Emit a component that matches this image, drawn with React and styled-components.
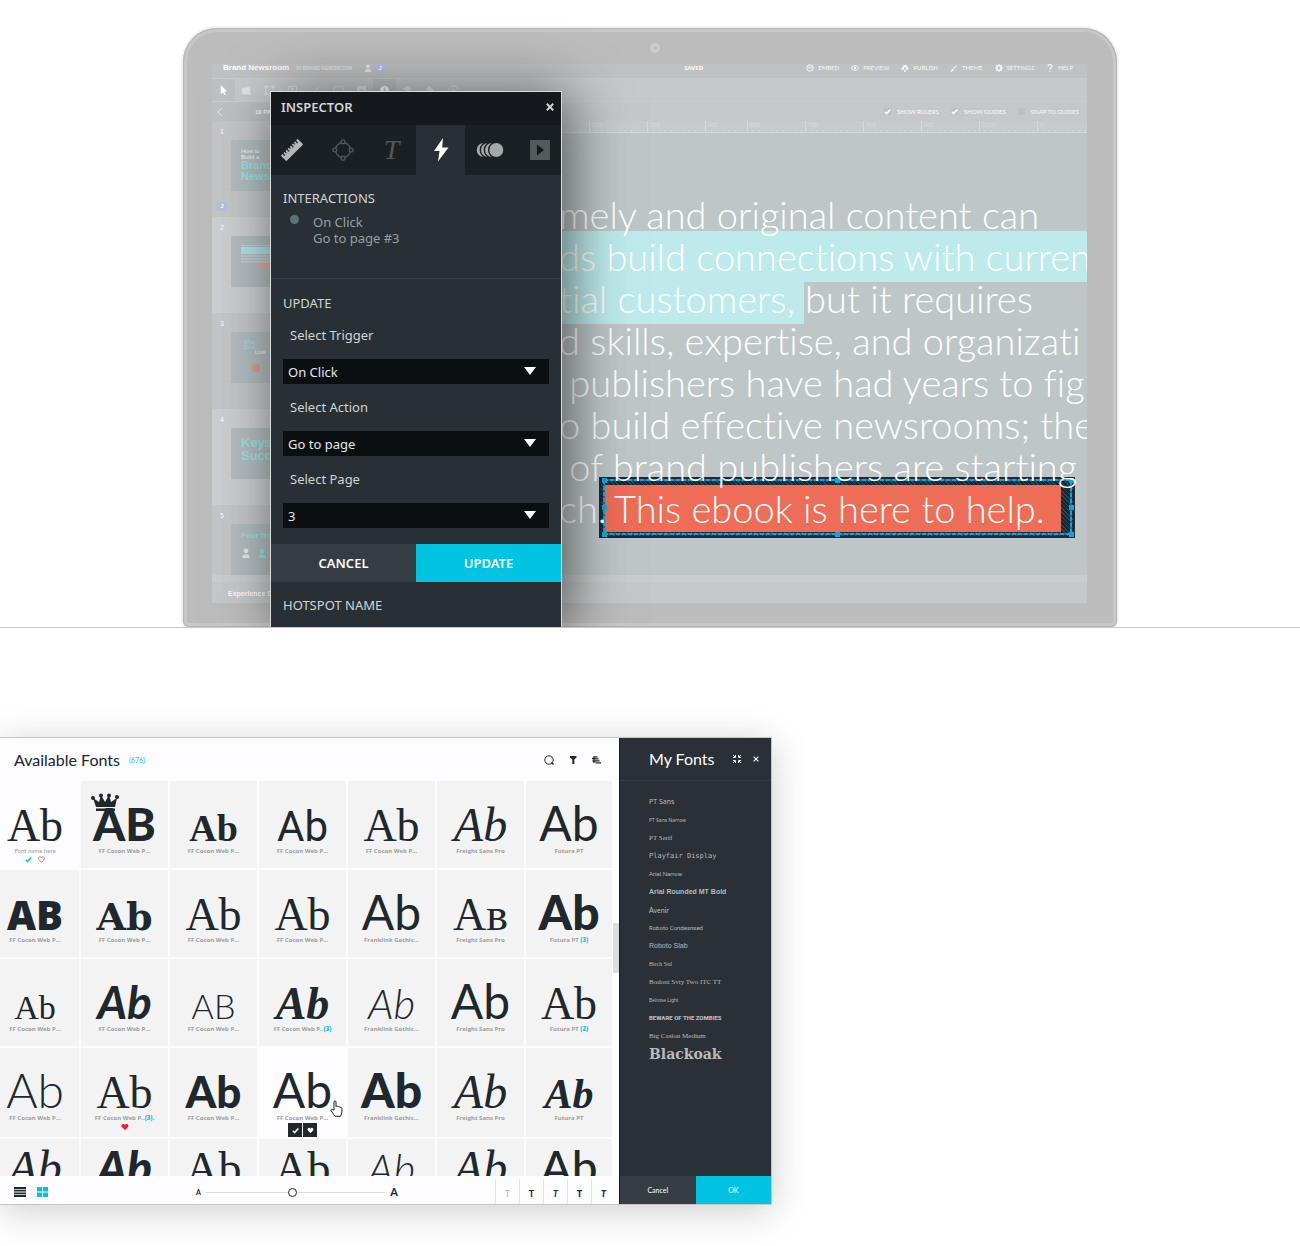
import React from 'react';
import styled, { createGlobalStyle, css } from 'styled-components';

const INK = '#20272d';
const CYAN = '#00c4e2';
const UI = '"Noto Sans", "Open Sans", sans-serif';
const GEO = 'Lato, "Open Sans", sans-serif';
const ARIAL = '"Liberation Sans", Arial, sans-serif';

const Global = createGlobalStyle`
  *, *::before, *::after { box-sizing: border-box; }
  body { margin: 0; background: #fff; font-family: ${GEO}; color: ${INK}; }
  button, select, input { font: inherit; color: inherit; margin: 0; padding: 0; border: 0; background: none; }
  h1, h2, h3, p, ul, ol { margin: 0; padding: 0; font-weight: inherit; font-size: inherit; }
  ul, ol { list-style: none; }
  a { color: inherit; text-decoration: none; }
  svg { display: block; flex: none; }
`;

/* ---------- Hero ---------- */

const Hero = styled.section`
  display: flex;
  justify-content: center;
  padding-top: 28px;
  border-bottom: 1px solid #c8c8c8;
  overflow: hidden;
`;

const Laptop = styled.div`
  position: relative;
  flex: 0 1 934px;
  min-width: 0;
  padding: 36px 30px 24px 29px;
  border-radius: 34px 34px 6px 6px;
  background: #bcbcbc;
  box-shadow: 0 0 0 2px #f3f3f3, inset 0 0 0 1px #b4b4b4, inset 0 0 0 4px #c7c7c7;
`;

const Camera = styled.span`
  position: absolute;
  top: 15px;
  left: 50%;
  width: 10px;
  height: 10px;
  border-radius: 50%;
  background: radial-gradient(#bdb9dc 0 1px, #cfcfd2 3px, #c8c8c8 5px);
`;

const Screen = styled.div`
  display: flex;
  flex-direction: column;
  overflow: hidden;
  background: #c6c7c9;
  color: #fbfbfb;
  font-family: ${ARIAL};
`;

const AppBar = styled.header`
  display: grid;
  grid-template-columns: 54% auto 1fr;
  align-items: start;
  height: 15px;
  padding: 0 10px 0 11px;
  background: #c0c1c2;
  border-bottom: 1px solid #cbcccd;
  line-height: 8px;
`;

const Brand = styled.div`
  display: flex;
  gap: 7px;
  font-size: 5px;
  color: #ececec;
  strong { font-size: 8px; color: #fff; line-height: 8px; }
  svg { margin: 0 -4px 0 5px; }
`;

const Badge = styled.span`
  width: 10px;
  height: 9px;
  background: #b4bfe0;
  color: #fff;
  font-size: 6px;
  font-weight: 700;
  line-height: 8px;
  text-align: center;
`;

const Saved = styled.span`
  font: 700 6px/8px ${UI};
`;

const AppMenu = styled.nav`
  display: flex;
  justify-content: flex-end;
  gap: 12px;
  padding-right: 4px;
  font: 6px/8px ${GEO};
`;

const MenuLink = styled.a`
  display: flex;
  align-items: center;
  gap: 4px;
  color: #f6f6f6;
`;

const ToolBar = styled.div`
  display: flex;
  height: 23px;
  background: #c7c8ca;
  border-bottom: 1px solid #cbccce;
`;

const Tool = styled.button`
  display: flex;
  align-items: center;
  justify-content: center;
  width: 23px;
  background: ${(p) => (p.$on ? '#bfc0c2' : 'transparent')};
  color: ${(p) => (p.$strong ? '#fff' : '#e2e3e4')};
`;

const Work = styled.div`
  display: flex;
  min-width: 0;
`;

const Pages = styled.aside`
  flex: none;
  width: 120px;
`;

const PagesHead = styled.div`
  display: flex;
  align-items: center;
  gap: 32px;
  height: 19px;
  padding-left: 5px;
  background: #bebfc1;
  font: 700 6px/8px ${ARIAL};
`;

const PageItem = styled.li`
  display: flex;
  height: 96px;
  background: ${(p) => (p.$on ? '#cccdd0' : '#c3c5c7')};
  &:last-child { height: 70px; }
`;

const PageMeta = styled.div`
  display: flex;
  flex-direction: column;
  justify-content: space-between;
  width: 19px;
  padding: 6px 0 6px 5px;
  font-size: 7px;
  line-height: 10px;
  text-indent: 3px;
  ${Badge} { text-indent: 0; }
`;

const Thumb = styled.div`
  flex: 1;
  height: 51px;
  margin: 19px 8px 0 0;
  padding: 8px 0 0 10px;
  overflow: hidden;
  background: #b2bcbf;
  white-space: nowrap;
`;

const ThumbText = styled.div`
  font-size: ${(p) => p.$size}px;
  line-height: ${(p) => p.$size}px;
  font-weight: ${(p) => (p.$size > 6 ? 700 : 400)};
  color: ${(p) => (p.$cyan ? '#9be0e2' : '#f4f6f6')};
`;

const ThumbBar = styled.div`
  height: ${(p) => p.$h}px;
  margin: 1px 0 1px ${(p) => p.$inset || 0}px;
  background: ${(p) => p.$tone};
`;

const People = styled.div`
  display: flex;
  gap: 6px;
  padding-top: 8px;
`;

const Stage = styled.div`
  flex: 1;
  min-width: 0;
`;

const GuideBar = styled.div`
  display: flex;
  align-items: center;
  justify-content: flex-end;
  gap: 12px;
  height: 19px;
  padding-right: 8px;
  font: 6px/8px ${GEO};
`;

const Guide = styled.label`
  display: flex;
  align-items: center;
  gap: 6px;
  input {
    appearance: none;
    width: 7px;
    height: 7px;
    background: #bebfc0;
  }
  span { display: grid; }
  svg, input { grid-area: 1 / 1; }
`;

const Ruler = styled.div`
  display: flex;
  height: 12px;
  padding-left: 25px;
  overflow: hidden;
  border-bottom: 1px solid #d6d8d9;
  background: #c9cacc;
`;

const RulerMark = styled.span`
  flex: none;
  width: ${(p) => (p.$short ? 42 : 58)}px;
  padding-left: 2px;
  border-left: 1px solid #d8d9da;
  color: #d9dadb;
  font-size: 6px;
  line-height: 8px;
  background: repeating-linear-gradient(90deg, transparent 0 5px, #d5d6d7 5px 6px) 0 100% / 100% 2px no-repeat;
`;

const Canvas = styled.div`
  position: relative;
  height: 442px;
  overflow: hidden;
  background: #bec6c8;
`;

const Copy = styled.p`
  position: relative;
  padding: 60px 0 0 227px;
  color: #fff;
  font: 300 38px/42px ${GEO};
  font-variant-ligatures: none;
  white-space: pre;
`;

const Line = styled.span`
  display: block;
  height: 42px;
`;

const Highlight = styled.span`
  position: absolute;
  left: 0;
  top: ${(p) => p.$top}px;
  width: ${(p) => p.$w};
  height: ${(p) => p.$h}px;
  background: #beeaeb;
`;

const hatch = (a, b) =>
  css`repeating-linear-gradient(45deg, ${a} 0 1px, ${b} 1px 3px)`;

const Hotspot = styled.a`
  position: absolute;
  left: 267px;
  top: 344px;
  width: 476px;
  height: 61px;
  padding: 8px 12px 6px 6px;
  background: ${hatch('#31444f', '#182733')};
  border: 2px solid #1b2a36;
  font: 300 38px/46px ${GEO};
  color: #fff;
  white-space: nowrap;
`;

const HotspotFill = styled.span`
  display: block;
  height: 47px;
  margin: -2px 0 0 -2px;
  padding-left: 9px;
  background: ${hatch('#e8735c', '#f26a53')};
`;

const Selection = styled.svg`
  position: absolute;
  inset: 0;
  width: 100%;
  height: 100%;
  overflow: visible;
`;

const StatusBar = styled.footer`
  display: flex;
  align-items: center;
  height: 28px;
  padding: 2px 16px 0;
  border-top: 7px solid #cacccd;
  background: #c6c7c8;
  font: 700 7px/8px ${ARIAL};
`;

/* ---------- Inspector ---------- */

const Inspector = styled.section`
  position: absolute;
  left: 87px;
  top: 63px;
  bottom: 0;
  width: 292px;
  display: flex;
  flex-direction: column;
  border: solid #d8dadb;
  border-width: 1px 1px 0;
  background: #282f35;
  color: #d3d5d6;
  box-shadow: 8px 4px 54px rgba(0, 0, 0, 0.58);
  font: 13px/16px ${UI};
`;

const TitleBar = styled.header`
  display: flex;
  justify-content: space-between;
  align-items: center;
  height: 33px;
  padding: 0 7px 4px 10px;
  background: #15181c;
  h2 { font: 600 13px/16px ${UI}; }
`;

const IconButton = styled.button`
  display: inline-flex;
  align-items: center;
  justify-content: center;
`;

const Tabs = styled.div`
  display: grid;
  grid-template-columns: 47px repeat(4, 49px) 1fr;
  height: 50px;
  background: #1a2023;
`;

const Tab = styled.button`
  display: flex;
  align-items: center;
  justify-content: center;
  background: ${(p) => (p.$on ? '#282f35' : 'transparent')};
  color: #50575b;
  font: italic 28px/30px "Liberation Serif", serif;
  &:first-child { padding-right: 5px; }
  &:last-child { padding-left: 5px; }
`;

const Interactions = styled.div`
  height: 104px;
  padding: 15px 12px 0;
  border-bottom: 1px solid #3a4248;
`;

const Heading = styled.h3`
  line-height: 16px;
`;

const Trigger = styled.div`
  display: flex;
  gap: 14px;
  padding: 8px 0 0 7px;
  color: #9b9fa2;
  &::before {
    content: '';
    width: 9px;
    height: 9px;
    margin-top: 1px;
    border-radius: 50%;
    background: #5f7079;
  }
`;

const Form = styled.form`
  padding-top: 16px;
`;

const FormBody = styled.div`
  padding: 0 12px 16px;
`;

const Field = styled.div`
  display: flex;
  flex-direction: column;
  label { height: 32px; padding-left: 7px; }
  & + & { padding-top: 15px; }
  ${Heading} + & { padding-top: 16px; }
`;

const SelectBox = styled.div`
  position: relative;
  select {
    appearance: none;
    display: block;
    width: 100%;
    height: 25px;
    padding: 0 5px;
    background: #0c0f11;
    color: #e6e7e8;
  }
  svg {
    position: absolute;
    right: 13px;
    top: 8px;
    pointer-events: none;
  }
`;

const Actions = styled.div`
  display: grid;
  grid-template-columns: 1fr 1fr;
`;

const Action = styled.button`
  height: ${(p) => (p.$small ? 28 : 38)}px;
  background: ${(p) => (p.$primary ? CYAN : '#353c43')};
  color: #fff;
  font: ${(p) => (p.$small ? `7px/8px ${GEO}` : `600 13px/16px ${UI}`)};
`;

const NextHeading = styled(Heading)`
  padding: 15px 12px 0;
`;

/* ---------- Font manager ---------- */

const FontSection = styled.section`
  padding: 109px 0 40px;
`;

const Manager = styled.div`
  display: flex;
  width: 100%;
  max-width: 772px;
  border: solid #c6c6c8;
  border-width: 1px 1px 1px 0;
  box-shadow: 0 6px 36px rgba(0, 0, 0, 0.2);
`;

const Library = styled.div`
  flex: 1;
  min-width: 0;
  background: #fdfcfe;
`;

const PanelHead = styled.header`
  display: flex;
  align-items: center;
  height: 43px;
  padding: ${(p) => (p.$dark ? '0 12px 0 29px' : '0 18px 0 14px')};
  border-bottom: ${(p) => (p.$dark ? '1px solid #363d45' : '0')};
  h2 { font: 16px/20px ${GEO}; }
`;

const Count = styled.span`
  color: #12c6e6;
  font-weight: ${(p) => (p.$bold ? 900 : 400)};
  font-size: ${(p) => (p.$bold ? 'inherit' : '7px')};
  margin-left: ${(p) => (p.$bold ? 0 : 9)}px;
`;

const HeadTools = styled.div`
  display: flex;
  gap: ${(p) => p.$gap}px;
  margin-left: auto;
`;

const Scroller = styled.div`
  display: flex;
  background: #fff;
`;

const Grid = styled.div`
  flex: 1;
  display: grid;
  grid-template-columns: 79px repeat(5, 1fr) 86px;
  grid-template-rows: repeat(4, 1fr) 37px;
  gap: 2px;
  height: 395px;
  background: #fcfcfd;
`;

const Track = styled.div`
  width: 7px;
  padding: 142px 0 0 1px;
  &::before {
    content: '';
    display: block;
    height: 50px;
    background: #dcdcdf;
  }
`;

const Cell = styled.div`
  position: relative;
  display: flex;
  flex-direction: column;
  align-items: center;
  min-width: 0;
  overflow: ${(p) => (p.$cut ? 'hidden' : 'visible')};
  padding-right: ${(p) => (p.$first ? 9 : 0)}px;
  background: ${(p) => (p.$open ? '#fdfcfe' : '#f3f3f3')};
`;

const Sample = styled.div`
  position: relative;
  line-height: 0;
  color: ${INK};
  white-space: nowrap;
  font-family: ${(p) => p.$face.family};
  font-size: ${(p) => p.$face.size}px;
  font-weight: ${(p) => p.$face.weight || 400};
  font-style: ${(p) => (p.$face.italic ? 'italic' : 'normal')};
  &::before {
    content: '';
    display: inline-block;
    height: ${(p) => (p.$cut ? 45 : 60)}px;
  }
`;

const Crown = styled.svg`
  position: absolute;
  left: -2px;
  top: 12px;
`;

const Caption = styled.div`
  margin-top: 6px;
  font: ${(p) => (p.$plain ? 400 : 700)} 6px/8px ${(p) => (p.$plain ? GEO : '"Open Sans", sans-serif')};
  color: #9c9d9e;
  white-space: nowrap;
`;

const Marks = styled.div`
  display: flex;
  gap: 6px;
  margin-top: 1px;
`;

const Quick = styled.div`
  display: flex;
  gap: 1px;
  margin-top: 1px;
`;

const QuickButton = styled(IconButton)`
  width: 14px;
  height: 14px;
  background: ${INK};
`;

const Pointer = styled.svg`
  position: absolute;
  right: 3px;
  top: 52px;
`;

const LibraryFoot = styled.footer`
  display: flex;
  align-items: stretch;
  height: 28px;
  padding-right: 4px;
`;

const Views = styled.div`
  display: flex;
  align-items: center;
  gap: 11px;
  padding: 3px 0 0 14px;
`;

const SizeControl = styled.div`
  flex: 1;
  display: flex;
  align-items: center;
  gap: 5px;
  padding: 4px 97px 0 148px;
  font: 700 7px/10px ${GEO};
  b { font-size: 11px; font-weight: 700; }
  input {
    appearance: none;
    flex: 1;
    min-width: 0;
    height: 10px;
    background: linear-gradient(#d9dfe0 0 0) 0 50% / 100% 1px no-repeat;
  }
  input::-webkit-slider-thumb {
    appearance: none;
    width: 9px;
    height: 9px;
    border: 1px solid ${INK};
    border-radius: 50%;
    background: #fdfcfe;
  }
`;

const StyleButton = styled.button`
  width: 24px;
  margin-top: 3px;
  padding-top: 3px;
  border-left: 1px solid #e2e3e6;
  font-family: ${GEO};
  font-size: 9px;
  font-weight: ${(p) => p.$weight};
  font-style: ${(p) => (p.$italic ? 'italic' : 'normal')};
  color: ${(p) => (p.$muted ? '#b4b5b8' : INK)};
`;

const MyFonts = styled.aside`
  display: flex;
  flex-direction: column;
  flex: none;
  width: 152px;
  background: #2a3036;
  border-left: 1px solid #161b20;
  color: #fff;
`;

const FontList = styled.ul`
  flex: 1;
  padding: 12px 0 0 29px;
`;

const FontName = styled.li`
  height: 18px;
  color: #b9bbbd;
  line-height: 18px;
  white-space: nowrap;
  font-family: ${(p) => p.$family};
  font-size: ${(p) => p.$size || 7}px;
  font-weight: ${(p) => p.$weight || 400};
`;

/* ---------- Icons ---------- */

const Check = ({ size = 7, color = '#fff' }) => (
  <svg width={size} height={size} viewBox="0 0 8 8" fill="none" stroke={color} strokeWidth="1.8">
    <path d="M1 4.2 3 6.3 7.2 1.6" />
  </svg>
);

const Heart = ({ fill = 'none', stroke = 'none', size = 7 }) => (
  <svg width={size} height={size} viewBox="0 0 8 8" fill={fill} stroke={stroke}>
    <path d="M4 7.2 1 4.1C0 2.6.9.9 2.3.9 3.2.9 3.8 1.5 4 2c.2-.5.8-1.1 1.7-1.1C7.1.9 8 2.6 7 4.1z" />
  </svg>
);

const Cross = ({ size, w }) => (
  <svg width={size} height={size} viewBox="0 0 10 10" stroke="currentColor" strokeWidth={w} fill="none">
    <path d="M1 1 9 9M9 1 1 9" />
  </svg>
);

const Caret = () => (
  <svg width="12" height="8" viewBox="0 0 12 8" fill="#fff"><path d="M0 0h12L6 8z" /></svg>
);

const Person = ({ size = 8, color = '#e8e9ea' }) => (
  <svg width={size} height={size} viewBox="0 0 8 8" fill={color}>
    <circle cx="4" cy="2.3" r="1.9" /><path d="M1 8c0-2.400 1.300-3 3-3s3 .6 3 3z" />
  </svg>
);

const menuIcons = {
  EMBED: <><circle cx="4" cy="4" r="3.200" fill="none" stroke="currentColor" /><path d="M2.400 2.500v1.800h1.200V2.500M4.600 2.500v1.800h1.200V2.500" stroke="currentColor" strokeWidth=".6" fill="none" /></>,
  PREVIEW: <><path d="M.2 4C2.200 1 5.800 1 7.800 4 5.800 7 2.200 7 .2 4z" fill="none" stroke="currentColor" strokeWidth=".9" /><circle cx="4" cy="4" r="1.200" /></>,
  PUBLISH: <path d="M2 6C-.3 6 0 3 1.700 3 2 .4 6 .4 6.300 3 8 3 8.300 6 6 6H4.800V4.800h1L4 3 2.200 4.800h1V8h1.600V6z" />,
  THEME: <path d="M8 0 3.300 4l1 1zM2.800 4.600C1.500 5 1.800 6.500 0 7.500c2 .5 3.700-.4 3.700-2z" />,
  SETTINGS: <><circle cx="4" cy="4" r="2.200" fill="none" stroke="currentColor" strokeWidth="1.500" /><path d="M4 0v1.500M4 6.500V8M0 4h1.500M6.500 4H8M1.200 1.200l1 1M5.800 5.800l1 1M6.800 1.200l-1 1M2.200 5.800l-1 1" stroke="currentColor" strokeWidth="1.200" /></>,
  HELP: <path d="M2 2.300C2 0 6 0 6 2.300 6 3.800 4 3.700 4 5.400M4 6.600v1.200" fill="none" stroke="currentColor" strokeWidth="1.200" />,
};

const toolIcons = [
  ['Select', <path d="M3 0v10l2.300-2.200L7 11l1.500-.8L7 7.200h3z" />],
  ['Assets', <path d="M1 3h4l1-2 1.500 2L10 1l-.5 3H10v6H1zM9.500 9.500H11V11H9.500z" />],
  ['Shape', <path d="M2 2h8v8H2zM1 1h2v2H1zM9 1h2v2H9zM1 9h2v2H1zM9 9h2v2H9z" fill="none" stroke="currentColor" strokeWidth=".8" />],
  ['Text', <path d="M1.500 1.500h9v9h-9zM4 4h4M6 4v5" fill="none" stroke="currentColor" />],
  ['Line', <path d="M2 10 10 2" stroke="currentColor" />],
  ['Frame', <path d="M1 2h10v8H1z" fill="none" stroke="currentColor" />],
  ['Media', <path fillRule="evenodd" d="M1 1h10v10H1zM4.500 3.500v5L8.500 6z" />],
  ['Info', <path fillRule="evenodd" d="M6 1a5 5 0 1 0 0 10A5 5 0 1 0 6 1zM5.200 5h1.600v4H5.200zM5.200 2.800h1.600v1.400H5.200z" />],
  ['Layers', <path d="M6 1l5.500 3L6 7 .5 4zM2 6l4 2.300L10 6l1 1-5 3-5-3z" />],
  ['Grab', <path d="M1 5l4-4 6 6-2 4H6z" />],
  ['Add', <path d="M6 1a5 5 0 1 0 0 10A5 5 0 1 0 6 1zM6 3.500v5M3.500 6h5" fill="none" stroke="currentColor" />],
];

const RulerIcon = () => (
  <svg width="22" height="22" viewBox="0 0 22 22">
    <g transform="rotate(-45 11 11)">
      <rect x="-1" y="7" width="24" height="8" rx="1" fill="#b4b7b9" />
      <path d="M2 6v4M5 6v3M8 6v4M11 6v3M14 6v4M17 6v3M20 6v4" stroke="#1a2023" strokeWidth="1.300" />
    </g>
  </svg>
);

const NodesIcon = () => (
  <svg width="22" height="22" viewBox="0 0 22 22" fill="none" stroke="currentColor" strokeWidth="1.400">
    <circle cx="11" cy="11" r="7.500" />
    <g fill="#1a2023"><circle cx="11" cy="2.800" r="1.900" /><circle cx="11" cy="19.200" r="1.900" /><circle cx="2.800" cy="11" r="1.900" /><circle cx="19.200" cy="11" r="1.900" /></g>
  </svg>
);

const BoltIcon = () => (
  <svg width="16" height="24" viewBox="0 0 16 24" fill="#fff"><path d="M10 0 1 13h5.500L5 23.500 15.500 9.500H9.200z" /></svg>
);

const MotionIcon = () => (
  <svg width="28" height="16" viewBox="0 0 28 16" fill="#a4a8aa" stroke="#1a2023" strokeWidth="1.400">
    <circle cx="7.700" cy="8" r="7.700" /><circle cx="12" cy="8" r="7.700" /><circle cx="16" cy="8" r="7.700" /><circle cx="20.300" cy="8" r="7.700" />
  </svg>
);

const PlayIcon = () => (
  <svg width="20" height="20" viewBox="0 0 20 20"><rect width="20" height="20" rx="1" fill="#54595c" /><path d="M7 4.500v11L14 10z" fill="#15191c" /></svg>
);

/* ---------- Data ---------- */

const serif = (size, o = {}) => ({ family: '"Liberation Serif", serif', size, ...o });
const lato = (size, o = {}) => ({ family: GEO, size, ...o });
const COCON = 'FF Cocon Web P...';
const FRANK = 'Franklink Gothic...';
const FREIGHT = 'Freight Sans Pro';
const FUTURA = 'Futura PT';
const script = serif(48, { italic: true });

const cells = [
  [
    { face: serif(46), name: 'Font name here', open: true, plain: true, marks: true },
    { text: 'AB', face: lato(46, { weight: 900 }), name: COCON, crown: true },
    { face: serif(38, { weight: 700 }), name: COCON },
    { face: { family: 'Roboto, sans-serif', size: 42, weight: 400 }, name: COCON },
    { face: serif(46), name: COCON },
    { face: script, name: FREIGHT },
    { face: lato(48), name: FUTURA },
  ],
  [
    { text: 'AB', face: { family: '"Open Sans", sans-serif', size: 40, weight: 800 }, name: COCON },
    { face: { family: '"DejaVu Serif", serif', size: 38, weight: 700 }, name: COCON },
    { face: serif(46), name: COCON },
    { face: serif(46), name: COCON },
    { face: lato(48), name: FRANK },
    { face: serif(46), text: 'Aʙ', name: FREIGHT },
    { face: lato(48, { weight: 900 }), name: FUTURA, count: '(3)' },
  ],
  [
    { face: serif(34), name: COCON },
    { face: lato(46, { weight: 700, italic: true }), name: COCON },
    { text: 'AB', face: lato(34, { weight: 300 }), name: COCON },
    { face: serif(46, { weight: 700, italic: true }), name: 'FF Cocon Web P..', count: '(3)' },
    { face: lato(42, { weight: 300, italic: true }), name: FRANK },
    { face: lato(48), name: FREIGHT },
    { face: serif(46), name: FUTURA, count: '(2)' },
  ],
  [
    { face: lato(48, { weight: 300 }), name: COCON },
    { face: serif(46), name: 'FF Cocon Web P..', count: '(3).', love: true },
    { face: lato(44, { weight: 900 }), name: COCON },
    { face: lato(48), name: COCON, open: true, quick: true },
    { face: lato(48, { weight: 900 }), name: FRANK },
    { face: script, name: FREIGHT },
    { face: serif(42, { weight: 700, italic: true }), name: FUTURA },
  ],
  [
    { face: script },
    { face: lato(46, { weight: 900, italic: true }) },
    { face: serif(46) },
    { face: serif(46) },
    { face: lato(42, { weight: 300, italic: true }) },
    { face: script },
    { face: lato(46, { weight: 500 }) },
  ],
];

const myFonts = [
  ['PT Sans', '"Noto Sans", sans-serif'],
  ['PT Sans Narrow', '"Noto Sans", sans-serif', 400, 5],
  ['PT Serif', '"Liberation Serif", serif'],
  ['Playfair Display', '"DejaVu Sans Mono", monospace'],
  ['Arial Narrow', ARIAL, 400, 6],
  ['Arial Rounded MT Bold', ARIAL, 700],
  ['Avenir', GEO],
  ['Roboto Condesnsed', 'Roboto, sans-serif', 400, 6],
  ['Roboto Slab', ARIAL],
  ['Birch Std', '"Liberation Serif", serif', 400, 6],
  ['Bodoni Svty Two ITC TT', '"Liberation Serif", serif'],
  ['Belrose Light', ARIAL, 400, 5],
  ['BEWARE OF THE ZOMBIES', 'Roboto, sans-serif', 900, 6],
  ['Big Caslon Medium', '"Liberation Serif", serif', 400, 7],
  ['Blackoak', '"DejaVu Serif", serif', 700, 14],
];

const fields = [
  ['trigger', 'Select Trigger', 'On Click'],
  ['action', 'Select Action', 'Go to page'],
  ['page', 'Select Page', '3'],
];

const rulerMarks = ['-200', '-100', '0', '100', '200', '300', '400', '600', '700', '800', '900', '1000', '1'];

/* ---------- Parts ---------- */

function PageThumbs() {
  return (
    <ol>
      <PageItem>
        <PageMeta>1<Badge>J</Badge></PageMeta>
        <Thumb>
          <ThumbText $size={6}>How to</ThumbText>
          <ThumbText $size={6}>Build a</ThumbText>
          <ThumbText $size={11} $cyan>Brand</ThumbText>
          <ThumbText $size={11} $cyan>Newsroom</ThumbText>
        </Thumb>
      </PageItem>
      <PageItem $on>
        <PageMeta>2</PageMeta>
        <Thumb>
          <ThumbBar $h={1} $tone="#c6cfd1" />
          <ThumbBar $h={7} $tone="#a9e4e6" />
          <ThumbBar $h={2} $tone="#c0cacc" />
          <ThumbBar $h={2} $tone="#c0cacc" />
          <ThumbBar $h={2} $tone="#c0cacc" />
          <ThumbBar $h={3} $tone="#e8a89e" $inset={16} />
        </Thumb>
      </PageItem>
      <PageItem>
        <PageMeta>3</PageMeta>
        <Thumb>
          <ThumbText $size={5} $cyan>&nbsp; What</ThumbText>
          <ThumbText $size={5} $cyan>&nbsp; Does</ThumbText>
          <ThumbText $size={5}>&nbsp; &nbsp; &nbsp; &nbsp; &nbsp; Look</ThumbText>
          <svg width="30" height="18" viewBox="0 0 30 18"><circle cx="15" cy="13" r="4" fill="#e09a90" /></svg>
        </Thumb>
      </PageItem>
      <PageItem $on>
        <PageMeta>4</PageMeta>
        <Thumb>
          <ThumbText $size={13} $cyan>Keys to</ThumbText>
          <ThumbText $size={13} $cyan>Success</ThumbText>
        </Thumb>
      </PageItem>
      <PageItem>
        <PageMeta>5</PageMeta>
        <Thumb>
          <ThumbText $size={8} $cyan>Four front</ThumbText>
          <People><Person size={10} /><Person size={10} color="#9be0e2" /><Person size={10} /></People>
        </Thumb>
      </PageItem>
    </ol>
  );
}

function Editor() {
  return (
    <Screen>
      <AppBar>
        <Brand><strong>Brand Newsroom</strong><span>IN BRAND NEWSROOM</span><Person /><Badge>J</Badge></Brand>
        <Saved>SAVED</Saved>
        <AppMenu>
          {Object.entries(menuIcons).map(([name, icon]) => (
            <MenuLink href="#" key={name}><svg width="8" height="8" viewBox="0 0 8 8" fill="currentColor">{icon}</svg>{name}</MenuLink>
          ))}
        </AppMenu>
      </AppBar>
      <ToolBar>
        {toolIcons.map(([name, icon], i) => (
          <Tool key={name} aria-label={name} $on={i === 0 || i === 7} $strong={i === 0 || i === 7}>
            <svg width="11" height="11" viewBox="0 0 12 12" fill="currentColor">{icon}</svg>
          </Tool>
        ))}
      </ToolBar>
      <Work>
        <Pages>
          <PagesHead>
            <svg width="6" height="8" viewBox="0 0 6 8" fill="none" stroke="#e4e4e4"><path d="M5 0 1 4l4 4" /></svg>
            10 PAGES
          </PagesHead>
          <PageThumbs />
        </Pages>
        <Stage>
          <GuideBar>
            {[['SHOW RULERS', true], ['SHOW GUIDES', true], ['SNAP TO GUIDES', false]].map(([label, on]) => (
              <Guide key={label}>
                <span><input type="checkbox" defaultChecked={on} />{on && <Check size={7} />}</span>{label}
              </Guide>
            ))}
          </GuideBar>
          <Ruler>{rulerMarks.map((m) => <RulerMark key={m} $short={m === '400'}>{m}</RulerMark>)}</Ruler>
          <Canvas>
            <Highlight $top={98} $h={51} $w="100%" />
            <Highlight $top={148} $h={43} $w="472px" />
            <Hotspot href="#page-3">
              <HotspotFill>This ebook is here to help.</HotspotFill>
              <Selection viewBox="0 0 472 57" preserveAspectRatio="none">
                <rect x="3" y="1" width="467" height="54" fill="none" stroke="#0b6f9c" strokeWidth="2" />
                <rect x="3" y="1" width="467" height="54" fill="none" stroke="#0fa6dc" strokeWidth="2" strokeDasharray="4 2" />
                {[3, 236, 470].map((x) => [1, 28, 55].map((y) => (x === 236 && y === 28 ? null : (
                  <rect key={`${x}-${y}`} x={x - 2} y={y - 2} width="5" height="5" fill="#0fa6dc" />
                ))))}
              </Selection>
            </Hotspot>
            <Copy>
              <Line>mely and original content can</Line>
              <Line>ds build connections with current</Line>
              <Line>tial customers, but it requires</Line>
              <Line>d skills, expertise, and organizati</Line>
              <Line> publishers have had years to fig</Line>
              <Line>o build effective newsrooms; the</Line>
              <Line> of brand publishers are starting</Line>
              <Line>ch.</Line>
            </Copy>
          </Canvas>
        </Stage>
      </Work>
      <StatusBar>Experience Size</StatusBar>
    </Screen>
  );
}

function InspectorPanel() {
  return (
    <Inspector>
      <TitleBar>
        <h2>INSPECTOR</h2>
        <IconButton aria-label="Close inspector"><Cross size={8} w={2.4} /></IconButton>
      </TitleBar>
      <Tabs>
        <Tab aria-label="Measure"><RulerIcon /></Tab>
        <Tab aria-label="Shape"><NodesIcon /></Tab>
        <Tab>T</Tab>
        <Tab aria-label="Interactions" $on><BoltIcon /></Tab>
        <Tab aria-label="Motion"><MotionIcon /></Tab>
        <Tab aria-label="Media"><PlayIcon /></Tab>
      </Tabs>
      <Interactions>
        <Heading>INTERACTIONS</Heading>
        <Trigger><div>On Click<br />Go to page #3</div></Trigger>
      </Interactions>
      <Form onSubmit={(e) => e.preventDefault()}>
        <FormBody>
          <Heading>UPDATE</Heading>
          {fields.map(([id, label, value]) => (
            <Field key={id}>
              <label htmlFor={id}>{label}</label>
              <SelectBox><select id={id} defaultValue={value}><option>{value}</option></select><Caret /></SelectBox>
            </Field>
          ))}
        </FormBody>
        <Actions>
          <Action type="button">CANCEL</Action>
          <Action type="submit" $primary>UPDATE</Action>
        </Actions>
      </Form>
      <NextHeading>HOTSPOT NAME</NextHeading>
    </Inspector>
  );
}

function FontCell({ item, first, cut }) {
  return (
    <Cell $first={first} $cut={cut} $open={item.open}>
      <Sample $face={item.face} $cut={cut}>
        {item.crown && (
          <Crown width="28" height="18" viewBox="0 0 28 18" fill={INK}>
            <path d="M5 14 2 5l6 4 2-7 4 7 4-7 2 7 6-4-2 9zM5 15.500h19V18H5z" />
            <circle cx="2" cy="5" r="2" /><circle cx="10" cy="2.500" r="2" /><circle cx="18" cy="2.500" r="2" /><circle cx="26" cy="4" r="2" />
          </Crown>
        )}
        {item.text || 'Ab'}
      </Sample>
      {item.name && (
        <Caption $plain={item.plain}>{item.name}{item.count && <Count $bold>{item.name === FUTURA ? ' ' : ''}{item.count}</Count>}</Caption>
      )}
      {item.marks && <Marks><Check color="#12c6e6" /><Heart stroke="#f0606a" /></Marks>}
      {item.love && <Marks><Heart fill="#ee1c25" size={8} /></Marks>}
      {item.quick && (
        <Quick>
          <QuickButton aria-label="Use font"><Check /></QuickButton>
          <QuickButton aria-label="Favourite"><Heart fill="#fff" /></QuickButton>
        </Quick>
      )}
      {item.quick && (
        <Pointer width="13" height="17" viewBox="0 0 13 17" fill="#fff" stroke={INK} strokeWidth="1">
          <path d="M4 10V2c0-1.500 2-1.500 2 0v4.500c.5-.8 2-.6 2 .4.600-.7 2-.4 2 .6.600-.5 2-.2 2 .9V12l-1.500 4.300H5L1 10.700c-.6-1.200.8-2 1.700-1.200z" />
        </Pointer>
      )}
    </Cell>
  );
}

function FontManager() {
  return (
    <Manager>
      <Library>
        <PanelHead>
          <h2>Available Fonts</h2><Count>(676)</Count>
          <HeadTools $gap={14}>
            <IconButton aria-label="Search">
              <svg width="10" height="10" viewBox="0 0 10 10" fill="none" stroke={INK}><circle cx="5" cy="5" r="4.200" /><path d="m7.500 7.500 2 2" strokeWidth="1.500" /></svg>
            </IconButton>
            <IconButton aria-label="Filter">
              <svg width="10" height="8" viewBox="0 0 10 8" fill={INK}><path d="M2 0h6.500v1.500L6.300 3.500V8H4.300V3.500L2 1.500z" /></svg>
            </IconButton>
            <IconButton aria-label="Sort">
              <svg width="9" height="8" viewBox="0 0 9 8" stroke={INK} strokeWidth="1.300" fill="none"><path d="M2 0v7M0 2.500h3.500M.5 5h3M3 .8h2.500M3 2.800h3.500M3.500 4.800h4M3.500 6.900h5.500" /></svg>
            </IconButton>
          </HeadTools>
        </PanelHead>
        <Scroller>
          <Grid>
            {cells.map((row, r) => row.map((item, c) => (
              <FontCell key={`${r}-${c}`} item={item} first={c === 0} cut={r === 4} />
            )))}
          </Grid>
          <Track />
        </Scroller>
        <LibraryFoot>
          <Views>
            <IconButton aria-label="List view">
              <svg width="12" height="10" viewBox="0 0 12 10" stroke={INK} strokeWidth="1.800"><path d="M0 1h12M0 3.700h12M0 6.400h12M0 9h12" /></svg>
            </IconButton>
            <IconButton aria-label="Grid view">
              <svg width="11" height="10" viewBox="0 0 11 10" fill={CYAN}><path d="M0 0h5v4.500H0zM6 0h5v4.500H6zM0 5.500h5V10H0zM6 5.500h5V10H6z" /></svg>
            </IconButton>
          </Views>
          <SizeControl><span>A</span><input type="range" defaultValue="48" aria-label="Sample size" /><b>A</b></SizeControl>
          <StyleButton $weight={400} $muted>T</StyleButton>
          <StyleButton $weight={700}>T</StyleButton>
          <StyleButton $weight={700} $italic>T</StyleButton>
          <StyleButton $weight={900}>T</StyleButton>
          <StyleButton $weight={900} $italic>T</StyleButton>
        </LibraryFoot>
      </Library>
      <MyFonts>
        <PanelHead $dark>
          <h2>My Fonts</h2>
          <HeadTools $gap={12}>
            <IconButton aria-label="Collapse">
              <svg width="8" height="8" viewBox="0 0 8 8" fill="none" stroke="#fff" strokeWidth=".9"><path d="M0 2.500h2.500V0M5.500 0v2.500H8M8 5.500H5.500V8M2.500 8V5.500H0M0 0l2 2M8 0 6 2M0 8l2-2M8 8 6 6" /></svg>
            </IconButton>
            <IconButton aria-label="Close"><Cross size={6} w={2} /></IconButton>
          </HeadTools>
        </PanelHead>
        <FontList>
          {myFonts.map(([name, family, weight, size]) => (
            <FontName key={name} $family={family} $weight={weight} $size={size}>{name}</FontName>
          ))}
        </FontList>
        <Actions>
          <Action $small>Cancel</Action>
          <Action $small $primary>OK</Action>
        </Actions>
      </MyFonts>
    </Manager>
  );
}

export default function App() {
  return (
    <>
      <Global />
      <main>
        <Hero>
          <Laptop>
            <Camera />
            <Editor />
            <InspectorPanel />
          </Laptop>
        </Hero>
        <FontSection>
          <FontManager />
        </FontSection>
      </main>
    </>
  );
}
